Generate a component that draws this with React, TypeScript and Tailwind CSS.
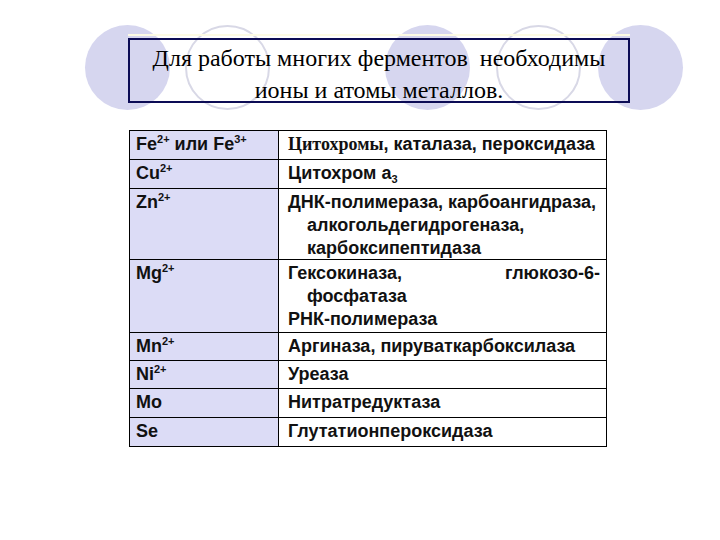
import React from "react";

const sans = { fontFamily: '"Liberation Sans", Arial, sans-serif' };

function Ion({ base, charge }: { base: string; charge?: string }) {
    return (
        <span>
            {base}
            {charge && <sup className="text-[11px] relative -top-[7px]">{charge}</sup>}
        </span>
    );
}

type Row = { h: string; left: React.ReactNode; right: React.ReactNode };

const rows: Row[] = [
    {
        h: "h-[28px]",
        left: (
            <>
                <Ion base="Fe" charge="2+" /> или <Ion base="Fe" charge="3+" />
            </>
        ),
        right: (
            <>
                <span className="font-['Liberation_Serif',serif]">Цитохромы</span>, каталаза, пероксидаза
            </>
        ),
    },
    {
        h: "h-[29px]",
        left: <Ion base="Cu" charge="2+" />,
        right: (
            <>
                Цитохром а<sub className="text-[11px] relative top-[4px]">3</sub>
            </>
        ),
    },
    {
        h: "h-[71px]",
        left: <Ion base="Zn" charge="2+" />,
        right: (
            <>
                <div>ДНК-полимераза, карбоангидраза,</div>
                <div className="pl-[19px]">алкогольдегидрогеназа,</div>
                <div className="pl-[19px]">карбоксипептидаза</div>
            </>
        ),
    },
    {
        h: "h-[73px]",
        left: <Ion base="Mg" charge="2+" />,
        right: (
            <>
                <div className="flex justify-between">
                    <span>Гексокиназа,</span>
                    <span>глюкозо-6-</span>
                </div>
                <div className="pl-[19px]">фосфатаза</div>
                <div>РНК-полимераза</div>
            </>
        ),
    },
    { h: "h-[28px]", left: <Ion base="Mn" charge="2+" />, right: "Аргиназа, пируваткарбоксилаза" },
    { h: "h-[28px]", left: <Ion base="Ni" charge="2+" />, right: "Уреаза" },
    { h: "h-[29px]", left: "Mo", right: "Нитратредуктаза" },
    { h: "h-[29px]", left: "Se", right: "Глутатионпероксидаза" },
];

function Circle({ filled }: { filled?: boolean }) {
    return filled ? (
        <div className="w-[85px] h-[85px] shrink-0 rounded-full bg-[#d6d6ef]" />
    ) : (
        <div className="w-[85px] h-[85px] shrink-0 rounded-full border-2 border-[#d8d8e6]" />
    );
}

function Header() {
    return (
        <div className="relative h-[103px]">
            {/* decorative circle band from the slide template, sits behind the title */}
            <div className="absolute inset-x-0 top-[25px] flex pl-[85px]">
                <Circle filled />
                <div className="ml-[15px]">
                    <Circle />
                </div>
                <div className="ml-[115px]">
                    <Circle filled />
                </div>
                <div className="ml-[26px]">
                    <Circle />
                </div>
                <div className="ml-[17px]">
                    <Circle filled />
                </div>
            </div>

            <div className="relative ml-[128px] pt-[34px]">
                <div className="w-[502px] h-[2px] bg-[#fdfbe4]" />
                <div className="mt-[2px] w-[502px] h-[65px] border-2 border-[#0c0c55] flex flex-col items-center justify-start font-['Liberation_Serif',serif] text-[24px] leading-[32px] text-black pt-[2px]">
                    <div className="whitespace-pre">Для работы многих ферментов  необходимы</div>
                    <div>ионы и атомы металлов.</div>
                </div>
            </div>
        </div>
    );
}

export default function App() {
    return (
        <div className="w-[720px] h-[540px] bg-white overflow-hidden">
            <Header />
            <div className="ml-[129px] mt-[27px] w-[478px] border border-black" style={sans}>
                {rows.map((r, i) => (
                    <div
                        key={i}
                        className={`flex ${r.h} ${i > 0 ? "border-t border-black" : ""} font-bold text-[18px] leading-[23px] text-[#111]`}
                    >
                        <div className="w-[149px] shrink-0 bg-[#dcdcf6] border-r border-black pl-[6px] pt-[2px]">
                            {r.left}
                        </div>
                        <div className="flex-1 pl-[9px] pr-[6px] pt-[2px]">{r.right}</div>
                    </div>
                ))}
            </div>
        </div>
    );
}
